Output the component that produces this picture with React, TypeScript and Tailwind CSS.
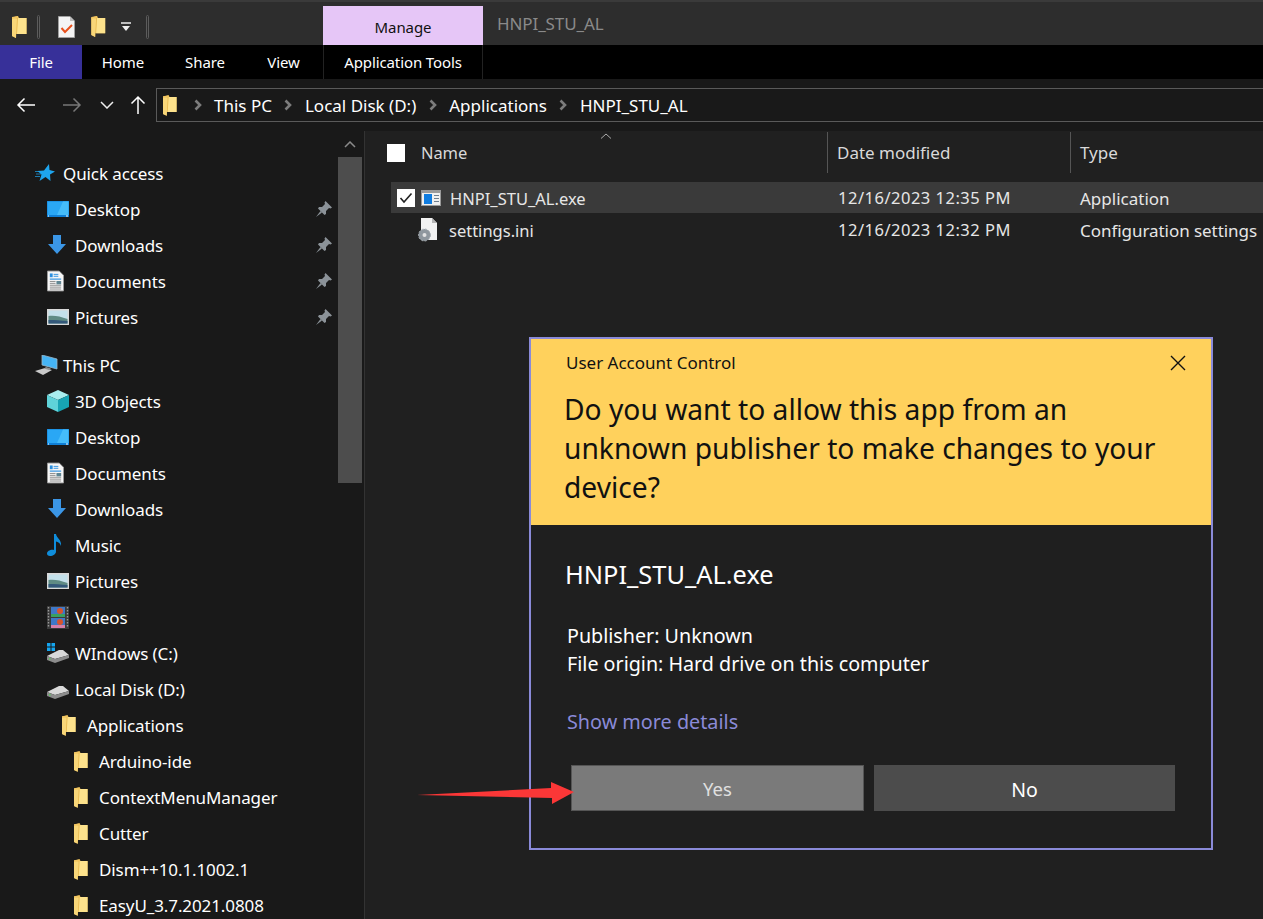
const font = "font-['Noto_Sans','Open_Sans',sans-serif]"

const FolderIcon = ({ className = 'w-[15px] h-[22px]' }: { className?: string }) => (
  <svg viewBox="0 0 15 22" className={className}>
    <path d="M0 1.5 L6 0 L7 2 L14.5 2 L14.5 18 L4 18 L4 22 L0 20 Z" fill="#e8b94f" />
    <path d="M6 2 L14.5 2 L14.5 18 L5 18 Z" fill="#fde28c" />
    <path d="M0 1.5 L5 2.5 L4 22 L0 20 Z" fill="#f8d678" />
    <path d="M0 1 L6 0 L6 2 L0 3 Z" fill="#f2c661" />
  </svg>
)

const DesktopIcon = () => (
  <svg viewBox="0 0 22 16" className="w-[22px] h-4">
    <rect width="22" height="16" fill="#0f7fd6" />
    <rect x="0.5" y="0.5" width="21" height="13.5" fill="#2aa7f5" />
    <path d="M16 0.5 H21.5 V14 H10 Z" fill="#45bcfa" />
    <rect x="1" y="14.5" width="1" height="1" fill="#fff" />
    <rect x="19" y="14.5" width="2" height="1" fill="#fff" />
  </svg>
)

const DownloadIcon = () => (
  <svg viewBox="0 0 20 20" className="w-5 h-5">
    <path d="M6 0 H14 V9 H19 L10 19 L1 9 H6 Z" fill="#3b96e6" />
  </svg>
)

const DocumentIcon = () => (
  <svg viewBox="0 0 18 22" className="w-[17px] h-[22px]">
    <path d="M0.5 0.5 H13 L17.5 5 V21.5 H0.5 Z" fill="#f6f6f6" stroke="#9a9a9a" />
    <path d="M3 3 H6 V7 H3 Z" fill="#2b8fe0" />
    <path d="M7 4 H12 M7 6 H12" stroke="#2b8fe0" />
    <path d="M3 9 H15" stroke="#2b8fe0" strokeWidth="1.2" />
    <path d="M3 11.5 H9 M3 13.5 H9 M3 15.5 H15 M3 17.5 H15 M3 19.5 H15" stroke="#8a8a8a" />
    <rect x="10" y="11" width="5" height="3.5" fill="#5f8592" />
  </svg>
)

const PicturesIcon = () => (
  <svg viewBox="0 0 22 16" className="w-[22px] h-4">
    <rect width="22" height="16" fill="#d9d9d9" />
    <rect x="1.5" y="1.5" width="19" height="13" fill="#c3e0ea" />
    <path d="M1.5 7 C6 6 13 7 20.5 10 V14.5 H1.5 Z" fill="#5f8b84" />
    <path d="M1.5 11 C8 11 14 11.5 20.5 12 V14.5 H1.5 Z" fill="#34587a" />
  </svg>
)

const CubeIcon = () => (
  <svg viewBox="0 0 22 22" className="w-[22px] h-[22px]">
    <path d="M11 0 L22 5 L11 10 L0 5 Z" fill="#a9eeef" />
    <path d="M0 5 L11 10 V22 L0 17 Z" fill="#5fd3d9" />
    <path d="M22 5 L11 10 V22 L22 17 Z" fill="#17a4b4" />
  </svg>
)

const MusicIcon = () => (
  <svg viewBox="0 0 16 22" className="w-4 h-[22px]">
    <path d="M7 0 H9 C9.5 4 15 6 14 12 C13 9 11 8 9 7.5 V17.5 C9 20 6 22 3 22 C1 22 0 21 0 19.5 C0 17 4 15 7 16 Z" fill="#0f8ddb" />
  </svg>
)

const VideosIcon = () => (
  <svg viewBox="0 0 22 23" className="w-[22px] h-[23px]">
    <rect width="22" height="23" fill="#3a3a3a" />
    <path d="M1.5 1 V22 M20.5 1 V22" stroke="#999" strokeWidth="1.4" strokeDasharray="1.5 1.5" />
    <rect x="4" y="1" width="14" height="10" fill="#3f78c8" />
    <rect x="4" y="12" width="14" height="10" fill="#3f78c8" />
    <circle cx="13" cy="5" r="3" fill="#d9542d" />
    <path d="M4 8 H18 V11 H4 Z" fill="#3aa060" />
    <circle cx="13" cy="16" r="3" fill="#d9542d" />
    <path d="M4 19 H18 V22 H4 Z" fill="#d77fa8" />
  </svg>
)

const DriveIcon = ({ windows }: { windows?: boolean }) => (
  <svg viewBox="0 0 22 20" className="w-[22px] h-5">
    {windows && (
      <g fill="#14a5f0">
        <rect x="0" y="0" width="3.5" height="3.5" />
        <rect x="4.5" y="0" width="3.5" height="3.5" />
        <rect x="0" y="4.5" width="3.5" height="3.5" />
        <rect x="4.5" y="4.5" width="3.5" height="3.5" />
      </g>
    )}
    <path d="M0 13 L12 7 H16 L22 12 L8 16 Z" fill="#d9d9d9" />
    <path d="M0 13 L8 16 L22 12 V15 L8 20 L0 17 Z" fill="#8c8c8c" />
    <rect x="2" y="15" width="1.5" height="1.5" fill="#58d05a" />
  </svg>
)

const PinIcon = () => (
  <svg viewBox="0 0 16 16" className="w-4 h-4">
    <path d="M9.5 0 L16 6.5 L14.5 7.5 L13 7 L10 10 L10 13 L8.5 14 L2 7.5 L3 6 L6 6 L9 3 L8.5 1.5 Z" fill="#8b9298" />
    <path d="M4.5 10 L0 16 L6 11.5 Z" fill="#8b9298" />
  </svg>
)

const StarIcon = () => (
  <svg viewBox="0 0 20 18" className="w-5 h-[18px]">
    <path d="M14 0 L14.5 6 L20 7.5 L15 10.5 L15.5 17 L10.5 13 L4.5 17 L6.5 10.5 L2.5 7 L9 6.5 Z" fill="#1ea5ee" />
    <path d="M0 7.5 H5 M1 10 H6 M0 12.5 H5" stroke="#1ea5ee" strokeWidth="0.7" />
  </svg>
)

const PcIcon = () => (
  <svg viewBox="0 0 24 20" className="w-6 h-5">
    <path d="M7 0 L22 4 V14 L7 10 Z" fill="#45b4f5" stroke="#9ab7c9" strokeWidth="0.8" />
    <path d="M0 16 L10 13 L17 15 L8 20 Z" fill="#c9c9c9" />
    <path d="M11 12 L16 13.5 L14 15 L9 13.5 Z" fill="#8f8f8f" />
  </svg>
)

type TreeItem = {
  label: string
  icon: React.ReactNode
  level: 0 | 1 | 2 | 3
  pinned?: boolean
  gap?: boolean
}

const rowLevels = ['pl-[35px]', 'pl-[47px]', 'pl-[62px]', 'pl-[74px]']
const iconBoxes = ['w-[28px]', 'w-[28px]', 'w-[25px]', 'w-[25px]']

const folder = <FolderIcon className="w-[14px] h-[21px]" />

const treeItems: TreeItem[] = [
  { label: 'Quick access', icon: <StarIcon />, level: 0 },
  { label: 'Desktop', icon: <DesktopIcon />, level: 1, pinned: true },
  { label: 'Downloads', icon: <DownloadIcon />, level: 1, pinned: true },
  { label: 'Documents', icon: <DocumentIcon />, level: 1, pinned: true },
  { label: 'Pictures', icon: <PicturesIcon />, level: 1, pinned: true },
  { label: 'This PC', icon: <PcIcon />, level: 0, gap: true },
  { label: '3D Objects', icon: <CubeIcon />, level: 1 },
  { label: 'Desktop', icon: <DesktopIcon />, level: 1 },
  { label: 'Documents', icon: <DocumentIcon />, level: 1 },
  { label: 'Downloads', icon: <DownloadIcon />, level: 1 },
  { label: 'Music', icon: <MusicIcon />, level: 1 },
  { label: 'Pictures', icon: <PicturesIcon />, level: 1 },
  { label: 'Videos', icon: <VideosIcon />, level: 1 },
  { label: 'WIndows (C:)', icon: <DriveIcon windows />, level: 1 },
  { label: 'Local Disk (D:)', icon: <DriveIcon />, level: 1 },
  { label: 'Applications', icon: folder, level: 2 },
  { label: 'Arduino-ide', icon: folder, level: 3 },
  { label: 'ContextMenuManager', icon: folder, level: 3 },
  { label: 'Cutter', icon: folder, level: 3 },
  { label: 'Dism++10.1.1002.1', icon: folder, level: 3 },
  { label: 'EasyU_3.7.2021.0808', icon: folder, level: 3 },
]

const TreeRow = ({ item }: { item: TreeItem }) => (
  <div className={`flex items-center h-9 shrink-0 ${rowLevels[item.level]} ${item.gap ? 'mt-3' : ''}`}>
    <span className={`flex items-center shrink-0 ${iconBoxes[item.level]}`}>{item.icon}</span>
    <span className="flex-1 whitespace-nowrap pt-px">{item.label}</span>
    {item.pinned && (
      <span className="mr-[6px]">
        <PinIcon />
      </span>
    )}
  </div>
)

const Chevron = () => (
  <svg viewBox="0 0 8 12" className="w-2 h-3 mx-[12.5px]">
    <path d="M1.5 1.5 L6 6 L1.5 10.5" fill="none" stroke="#7c7c7c" strokeWidth="2.6" />
  </svg>
)

const ExeIcon = () => (
  <svg viewBox="0 0 20 16" className="w-5 h-4">
    <rect width="20" height="16" fill="#9a9a9a" />
    <rect x="1" y="3" width="18" height="12" fill="#f0f0f0" />
    <rect x="3" y="4" width="8" height="10" fill="#0f7ce0" />
    <path d="M13 5.5 H18 M13 8.5 H18 M13 11.5 H18" stroke="#6f7f8f" strokeWidth="1.2" />
  </svg>
)

const IniIcon = () => (
  <svg viewBox="0 0 20 24" className="w-5 h-6">
    <path d="M3 0 H14 L19 5 V22 H3 Z" fill="#f2f2f2" />
    <path d="M14 0 L19 5 H14 Z" fill="#b5b5b5" />
    <circle cx="6.5" cy="17" r="6" fill="#8f979e" stroke="#aeb4b9" strokeDasharray="2 1.5" />
    <circle cx="6.5" cy="17" r="2" fill="#e2e2e2" />
  </svg>
)

const App = () => {
  return (
    <div className={`relative w-[1263px] h-[919px] overflow-hidden flex flex-col bg-[#202020] text-white text-[17px] tracking-[-0.1px] ${font}`}>
      {/* title bar */}
      <div className="flex h-[45px] shrink-0 bg-[#2d2d2d] border-t-2 border-[#3a3a3a] items-end">
        <div className="flex items-center h-[37px] w-[323px] self-end">
          <span className="ml-[12px]">
            <FolderIcon />
          </span>
          <span className="ml-[10px] w-[3px] h-6 rounded-sm border border-[#5c5c5c]" />
          <span className="ml-[18px]">
            <svg viewBox="0 0 17 22" className="w-[17px] h-[22px]">
              <path d="M0.5 0.5 H12 L16.5 5 V21.5 H0.5 Z" fill="#f4f4f4" stroke="#a0a0a0" />
              <path d="M12 0.5 L16.5 5 H12 Z" fill="#bdbdbd" />
              <path d="M3.5 12 L7 16 L14 9" fill="none" stroke="#e8501c" strokeWidth="2" />
            </svg>
          </span>
          <span className="ml-[16px]">
            <FolderIcon className="w-[15px] h-[21px]" />
          </span>
          <span className="ml-[15px]">
            <svg viewBox="0 0 10 10" className="w-[10px] h-[10px]">
              <path d="M0 1 H10" stroke="#eee" strokeWidth="1.5" />
              <path d="M1 4 H9 L5 9 Z" fill="#eee" />
            </svg>
          </span>
          <span className="ml-[15px] w-[3px] h-6 rounded-sm border border-[#5c5c5c]" />
        </div>
        <div className="w-[160px] h-[39px] bg-[#e6c6f7] text-[#111] text-[15px] flex items-center justify-center pt-[4px]">
          Manage
        </div>
        <div className="h-[39px] pl-[14px] flex items-center text-[#8a8a8a] text-[17px] pb-[4px]">HNPI_STU_AL</div>
      </div>

      {/* ribbon tabs */}
      <div className="flex h-[34px] shrink-0 bg-black items-center text-[15px]">
        <div className="w-[82px] h-full bg-[#373099] flex items-center justify-center">File</div>
        <div className="w-[82px] text-center">Home</div>
        <div className="w-[82px] text-center">Share</div>
        <div className="w-[75px] text-center">View</div>
        <div className="w-[160px] ml-[2px] h-full flex items-center justify-center border-x border-[#222]">Application Tools</div>
      </div>

      {/* address bar */}
      <div className="flex h-[52px] shrink-0 bg-[#191919] items-center">
        <div className="flex items-center w-[156px] pl-[16px]">
          <svg viewBox="0 0 20 16" className="w-5 h-4">
            <path d="M19 8 H2 M8.5 1.5 L2 8 L8.5 14.5" fill="none" stroke="#fff" strokeWidth="1.5" />
          </svg>
          <svg viewBox="0 0 20 16" className="w-5 h-4 ml-[26px]">
            <path d="M1 8 H18 M11.5 1.5 L18 8 L11.5 14.5" fill="none" stroke="#777" strokeWidth="1.5" />
          </svg>
          <svg viewBox="0 0 14 8" className="w-[14px] h-2 ml-[18px]">
            <path d="M1 1 L7 7 L13 1" fill="none" stroke="#eee" strokeWidth="1.5" />
          </svg>
          <svg viewBox="0 0 16 20" className="w-4 h-5 ml-[16px]">
            <path d="M8 19 V2 M1.5 8.5 L8 2 L14.5 8.5" fill="none" stroke="#fff" strokeWidth="1.5" />
          </svg>
        </div>
        <div className="flex items-center flex-1 h-[34px] border border-[#5a5a5a] border-r-0 pl-[6px] tracking-normal">
          <FolderIcon className="w-[14px] h-[21px]" />
          <span className="w-[4px]" />
          <Chevron />
          <span className="pt-px">This PC</span>
          <Chevron />
          <span className="pt-px">Local Disk (D:)</span>
          <Chevron />
          <span className="pt-px">Applications</span>
          <Chevron />
          <span className="pt-px">HNPI_STU_AL</span>
        </div>
      </div>

      <div className="flex flex-1 min-h-0">
        {/* nav tree */}
        <div className="flex w-[365px] shrink-0 bg-[#191919] border-r border-[#333]">
          <div className="w-[338px] shrink-0 flex flex-col pt-[24px] overflow-hidden">
            {treeItems.map((item, i) => (
              <TreeRow key={i} item={item} />
            ))}
          </div>
          <div className="w-[24px] flex flex-col">
            <div className="h-[26px] flex items-center justify-center">
              <svg viewBox="0 0 12 7" className="w-3 h-[7px]">
                <path d="M1 6 L6 1 L11 6" fill="none" stroke="#8a8a8a" strokeWidth="1.5" />
              </svg>
            </div>
            <div className="h-[326px] bg-[#4d4d4d]" />
          </div>
        </div>

        {/* file list */}
        <div className="flex-1 flex flex-col bg-[#202020] min-w-0">
          <div className="relative flex h-[41px] mt-px text-[#d9d9d9] text-[17px] tracking-normal">
            <div className="flex items-center w-[463px] pl-[22px] border-r border-[#555]">
              <span className="w-[18px] h-[18px] bg-white mr-4" />
              <span className="pt-[2px] text-[16.5px] tracking-[-0.1px]">Name</span>
            </div>
            <div className="flex items-center w-[243px] pl-[9px] border-r border-[#555]">Date modified</div>
            <div className="flex items-center pl-[9px]">Type</div>
            <svg viewBox="0 0 12 6" className="absolute left-[235px] top-[1px] w-3 h-[6px]">
              <path d="M1 5.5 L6 1 L11 5.5" fill="none" stroke="#aaa" />
            </svg>
          </div>
          <div className="mt-[9px] ml-[26px] text-[#e6e6e6] text-[16.5px] tracking-normal">
            <div className="flex items-center h-[31px] bg-[#3a3a3a]">
              <span className="w-[18px] h-[18px] ml-[6px] bg-white flex items-center justify-center">
                <svg viewBox="0 0 14 12" className="w-[14px] h-3">
                  <path d="M1.5 6 L5 10 L12.5 1.5" fill="none" stroke="#222" strokeWidth="1.6" />
                </svg>
              </span>
              <span className="ml-[6px] w-[29px]">
                <ExeIcon />
              </span>
              <span className="w-[388px] pt-[3px]">HNPI_STU_AL.exe</span>
              <span className="w-[242px] pt-[2px] tracking-[0.5px]">12/16/2023 12:35 PM</span>
              <span className="pt-[2px] text-[17px]">Application</span>
            </div>
            <div className="flex items-center h-[33px]">
              <span className="ml-[27px] w-[31px]">
                <IniIcon />
              </span>
              <span className="w-[389px] pt-[3px]">settings.ini</span>
              <span className="w-[242px] pt-[2px] tracking-[0.5px]">12/16/2023 12:32 PM</span>
              <span className="whitespace-nowrap pt-[2px] text-[17px] tracking-[-0.05px]">Configuration settings</span>
            </div>
          </div>
        </div>
      </div>

      {/* UAC dialog */}
      <div className="absolute left-[529px] top-[337px] w-[684px] h-[513px] border-2 border-[#8a8ad8] flex flex-col bg-[#1f1f1f] tracking-normal">
        <div className="h-[186px] shrink-0 bg-[#ffd15c] text-[#111] pl-[35px] pr-[23px] pt-[12px]">
          <div className="flex items-center justify-between h-6 text-[17px]">
            <span>User Account Control</span>
            <svg viewBox="0 0 16 16" className="w-4 h-4 mr-[2px]">
              <path d="M1 1 L15 15 M15 1 L1 15" stroke="#111" strokeWidth="1.4" />
            </svg>
          </div>
          <div className="mt-[15px] -ml-[2px] text-[28.2px] leading-[39px] w-[620px]">
            Do you want to allow this app from an unknown publisher to make changes to your device?
          </div>
        </div>
        <div className="flex-1 flex flex-col pl-[36px]">
          <div className="mt-[30px] text-[25.4px] leading-[38px] -ml-[2px]">HNPI_STU_AL.exe</div>
          <div className="mt-[29px] text-[19.7px] leading-[28px]">
            <div>Publisher: Unknown</div>
            <div>File origin: Hard drive on this computer</div>
          </div>
          <div className="mt-[30px] text-[19.8px] leading-[28px] text-[#8a8ad8]">Show more details</div>
          <div className="flex mt-[29px] ml-[4px]">
            <div className="w-[293px] h-[46px] bg-[#7a7a7a] border border-[#555] text-[#e0e0e0] text-[18.5px] flex items-center justify-center pt-[2px]">
              Yes
            </div>
            <div className="w-[301px] h-[46px] ml-[10px] bg-[#4c4c4c] text-[19.5px] flex items-center justify-center pt-[3px]">
              No
            </div>
          </div>
        </div>
      </div>

      {/* red arrow */}
      <svg viewBox="0 0 160 23" className="absolute left-[416px] top-[782px] w-[160px] h-[23px]">
        <path d="M1 13 L135 6 L135 0 L158 10 L136 22 L136 16 Z" fill="#fb3737" />
      </svg>
    </div>
  )
}

export default App
